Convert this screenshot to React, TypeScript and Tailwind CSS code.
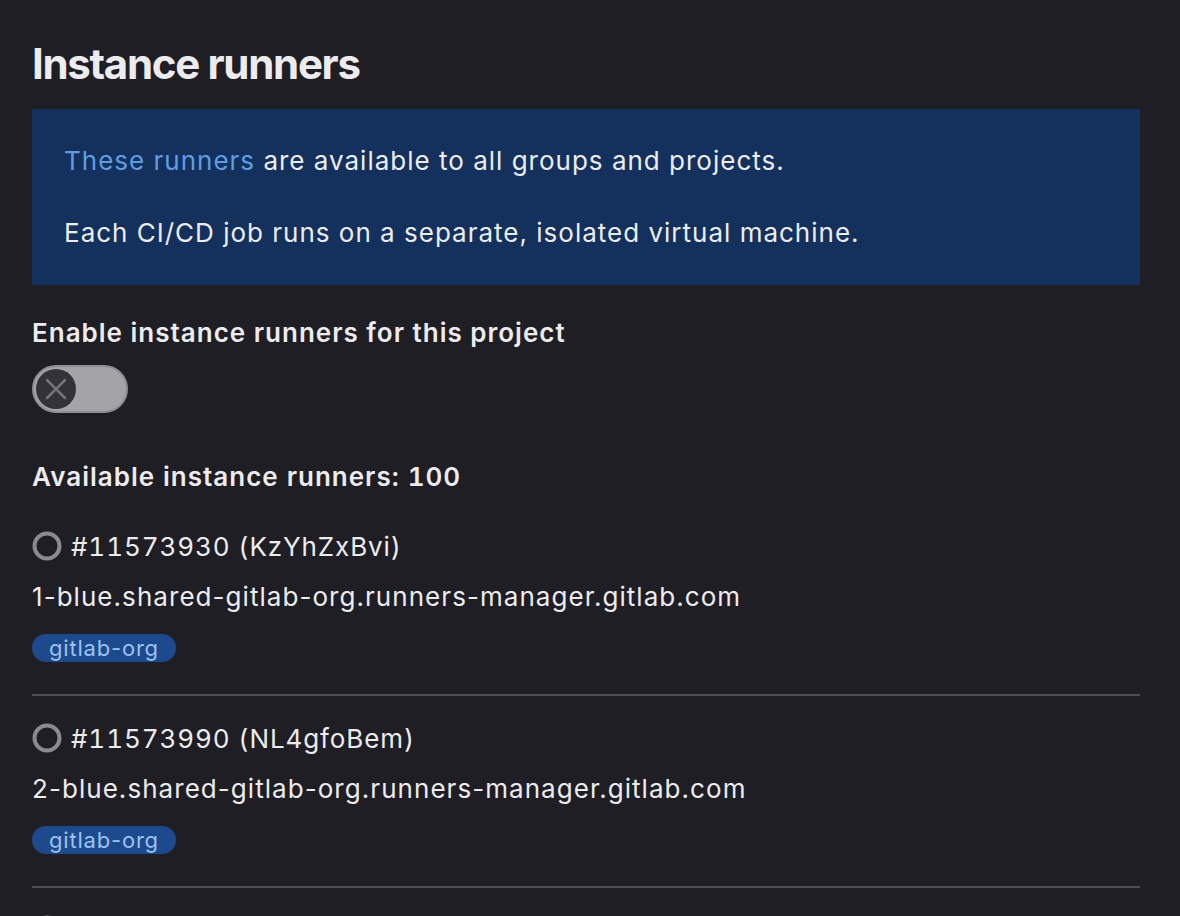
const runners = [
  { id: '#11573930', token: 'KzYhZxBvi', host: '1-blue.shared-gitlab-org.runners-manager.gitlab.com', tag: 'gitlab-org' },
  { id: '#11573990', token: 'NL4gfoBem', host: '2-blue.shared-gitlab-org.runners-manager.gitlab.com', tag: 'gitlab-org' },
  { id: '#11574000', token: 'Xy9pQrStu', host: '3-blue.shared-gitlab-org.runners-manager.gitlab.com', tag: 'gitlab-org' },
];

function StatusCircle() {
  return (
    <svg width="30" height="30" viewBox="0 0 30 30" className="shrink-0">
      <circle cx="15" cy="15" r="12.5" fill="none" stroke="#8b8a90" strokeWidth="4" />
    </svg>
  );
}

function Toggle() {
  return (
    <div className="flex h-[48px] w-[96px] items-center rounded-full border-2 border-[#8f8e94] bg-[#a4a3a8] pl-[2px]">
      <div className="flex h-[40px] w-[40px] items-center justify-center rounded-full bg-[#333238]">
        <svg width="26" height="26" viewBox="0 0 26 26">
          <path d="M4 4 L22 22 M22 4 L4 22" stroke="#737278" strokeWidth="2.5" strokeLinecap="round" />
        </svg>
      </div>
    </div>
  );
}

export default function App() {
  return (
    <div
      className="h-[916px] w-full overflow-hidden bg-[#1f1e24] px-[32px] pt-[36px] text-[#ececef]"
      style={{ fontFamily: 'Inter, "Noto Sans", sans-serif' }}
    >
      <div className="w-[1108px]">
        <h1 className="text-[42px] font-bold leading-[56px] tracking-[-1.3px]">Instance runners</h1>

        <div className="mt-[17px] bg-[#13315c] px-[32px] py-[34px] text-[26px] leading-[36px] tracking-[1px]">
          <p>
            <span className="text-[#5f9de2]">These runners</span> are available to all groups and projects.
          </p>
          <p className="mt-[36px]">Each CI/CD job runs on a separate, isolated virtual machine.</p>
        </div>

        <div className="mt-[30px] text-[26px] font-semibold leading-[36px] tracking-[1px]">
          Enable instance runners for this project
        </div>
        <div className="mt-[14px]">
          <Toggle />
        </div>

        <div className="mt-[46px] text-[26px] font-semibold leading-[36px] tracking-[1px] tabular-nums">
          Available instance runners: 100
        </div>

        <div className="mt-[33px]">
          {runners.map((r, i) => (
            <div key={r.id}>
              {i > 0 && <div className="h-[2px] bg-[#4f4e54]" />}
              <div className={i > 0 ? 'pt-[24px] pb-[28px]' : 'pb-[28px]'}>
                <div className="flex h-[36px] items-center gap-[9px] text-[26px] tracking-[0.9px] tabular-nums">
                  <StatusCircle />
                  <span>
                    {r.id} ({r.token})
                  </span>
                </div>
                <div className="mt-[15px] text-[26px] leading-[36px] tracking-[1.05px]">{r.host}</div>
                <div className="mt-[15px] flex h-[36px] items-center">
                  <span className="inline-flex h-[28px] items-center rounded-full bg-[#1d4a8c] px-[17px] text-[22px] tracking-[0.8px] text-[#9cc2f2]">
                    {r.tag}
                  </span>
                </div>
              </div>
            </div>
          ))}
        </div>
      </div>
    </div>
  );
}
